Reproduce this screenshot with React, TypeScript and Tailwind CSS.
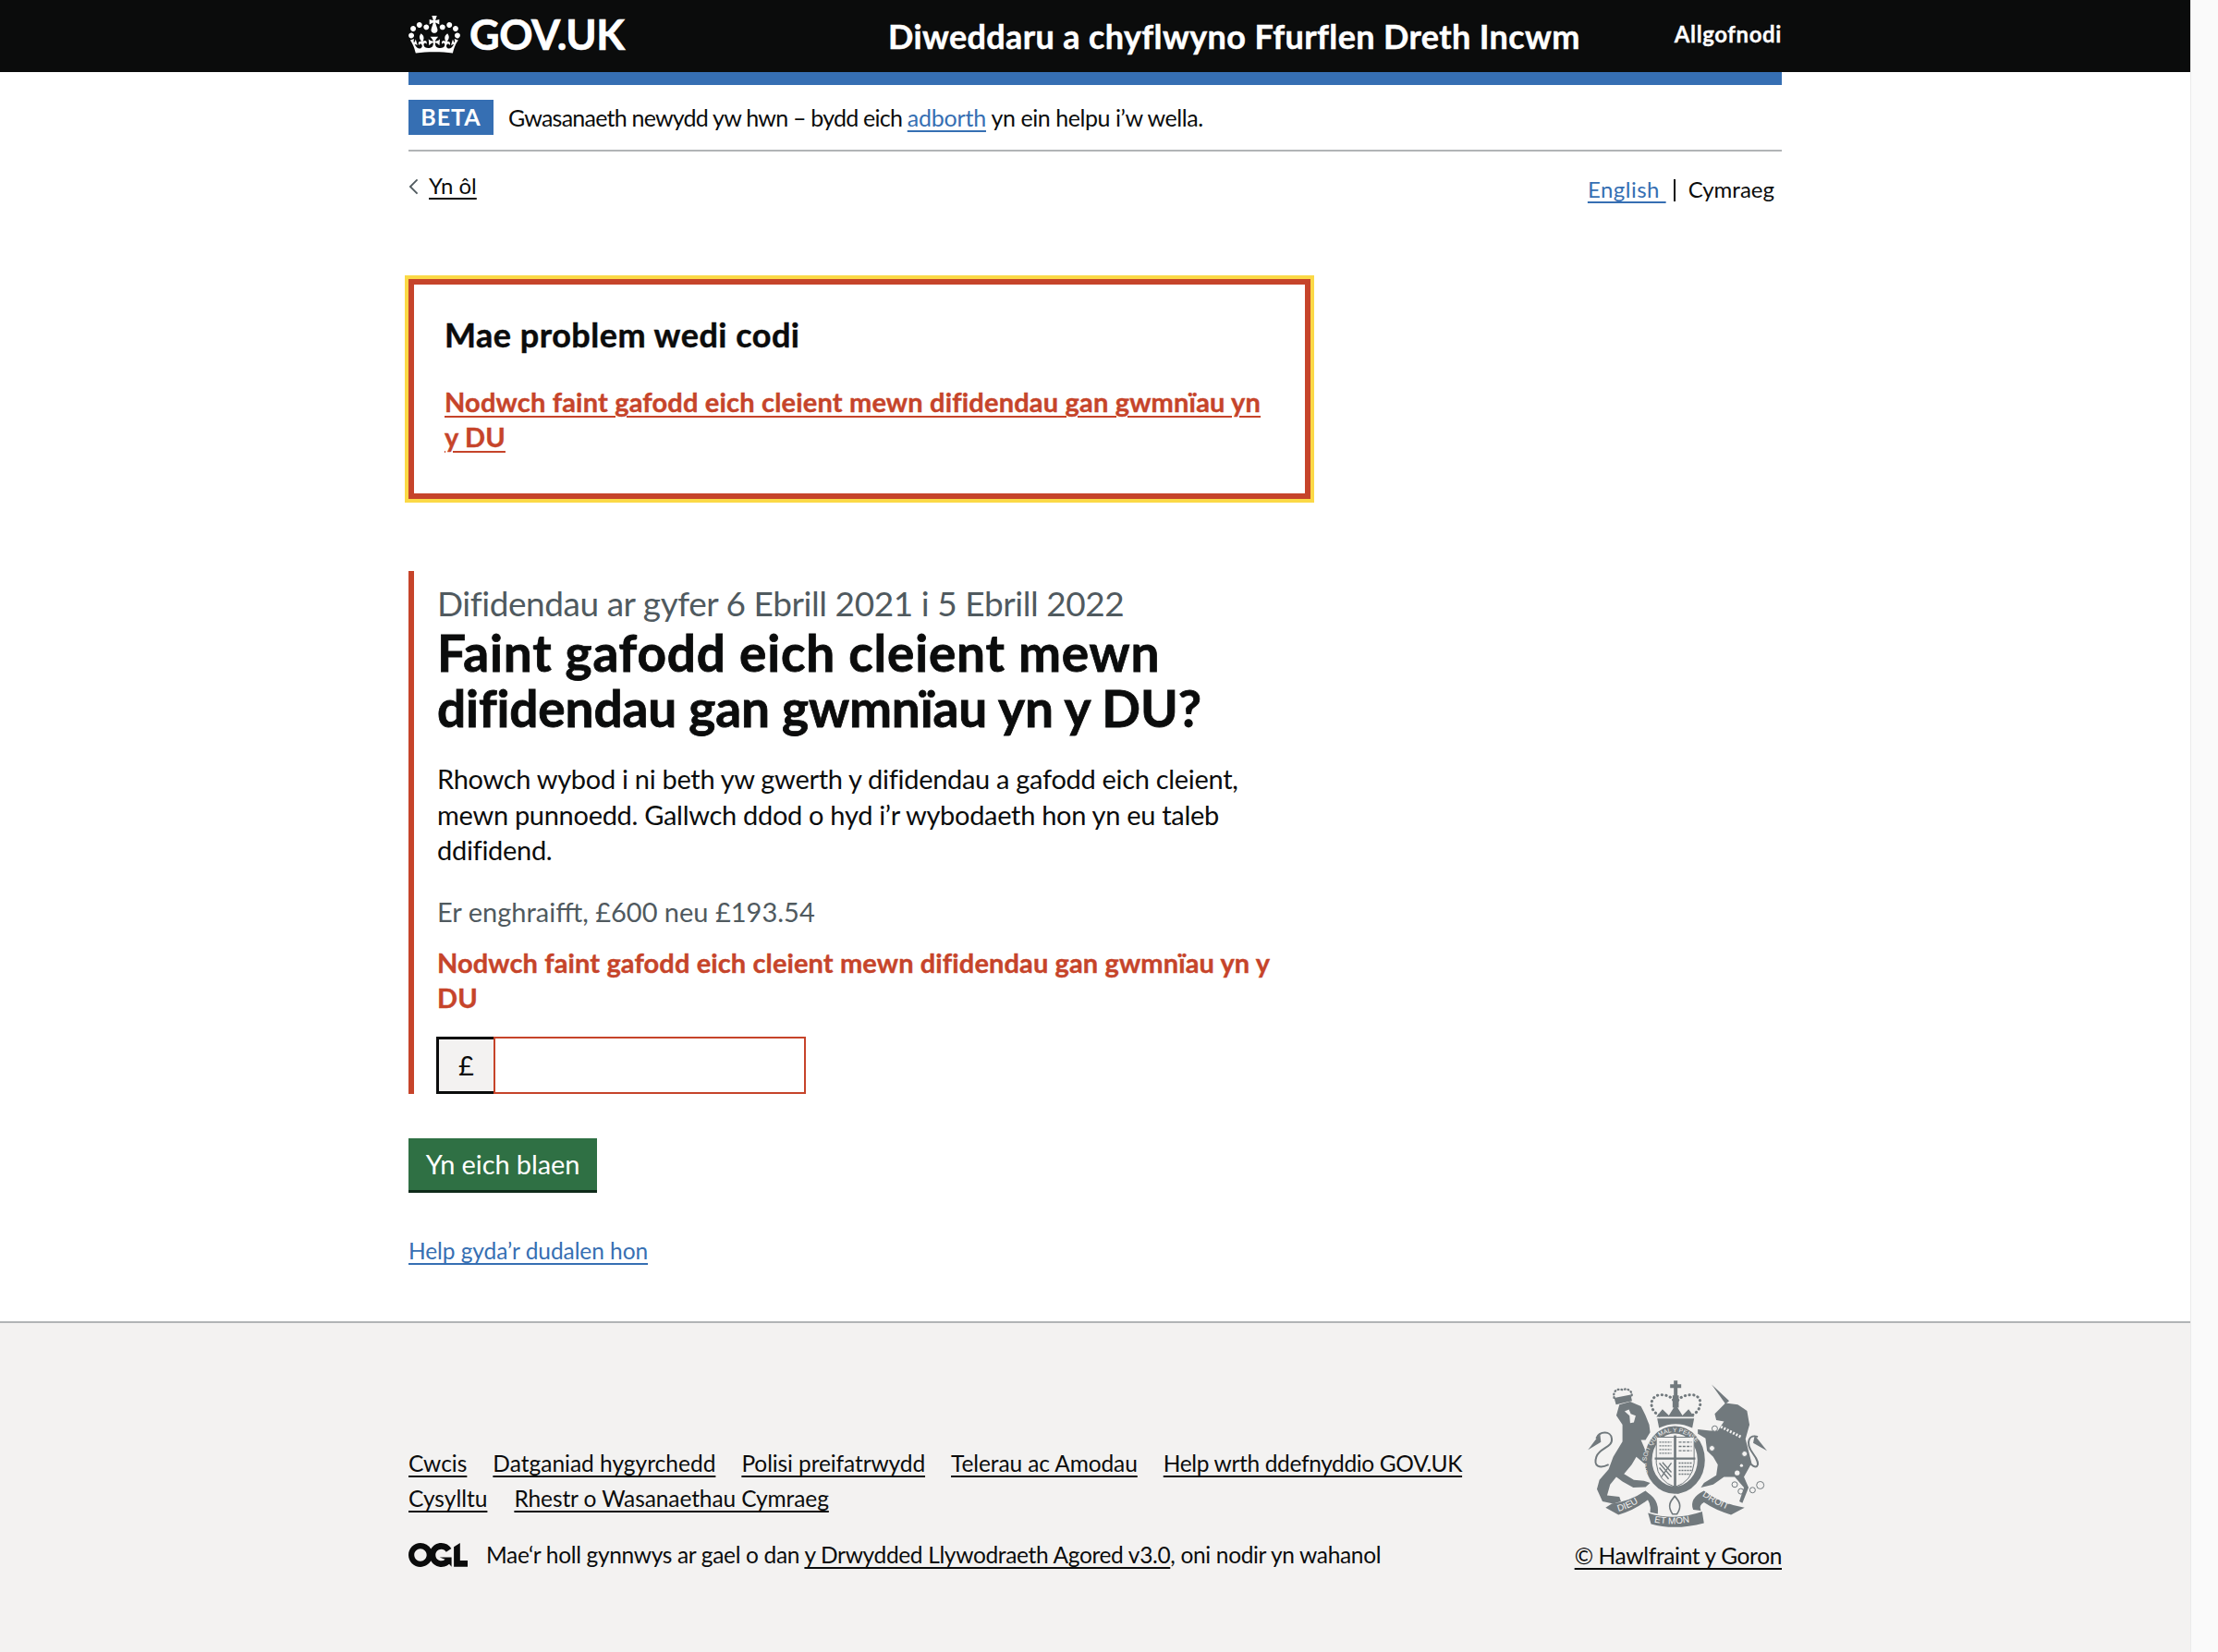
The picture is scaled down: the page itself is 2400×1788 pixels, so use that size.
import React from 'react';

const CROWN =
  'M25 30.2c3.5 1.5 7.7-.2 9.1-3.7 1.5-3.6-.2-7.8-3.9-9.2-3.6-1.4-7.6.3-9.1 3.9-1.4 3.5.3 7.5 3.9 9zM9 39.5c3.6 1.5 7.8-.2 9.2-3.7 1.5-3.6-.2-7.8-3.9-9.1-3.6-1.5-7.6.2-9.1 3.8-1.4 3.5.3 7.5 3.8 9zM4.4 57.2c3.5 1.5 7.7-.2 9.1-3.8 1.5-3.6-.2-7.7-3.9-9.1-3.5-1.5-7.6.3-9.1 3.8-1.4 3.5.3 7.6 3.9 9.1zm38.3-21.4c3.5 1.5 7.7-.2 9.1-3.8 1.5-3.6-.2-7.7-3.9-9.1-3.6-1.5-7.6.3-9.1 3.8-1.3 3.6.4 7.7 3.9 9.1zm64.4-5.6c-3.6 1.5-7.8-.2-9.1-3.7-1.5-3.6.2-7.8 3.8-9.2 3.6-1.4 7.7.3 9.2 3.9 1.3 3.5-.4 7.5-3.9 9zm15.9 9.3c-3.6 1.5-7.7-.2-9.1-3.7-1.5-3.6.2-7.8 3.7-9.1 3.6-1.5 7.7.2 9.2 3.8 1.5 3.5-.3 7.5-3.8 9zm4.7 17.7c-3.6 1.5-7.8-.2-9.2-3.8-1.5-3.6.2-7.7 3.9-9.1 3.6-1.5 7.7.3 9.2 3.8 1.3 3.5-.4 7.6-3.9 9.1zM89.3 35.8c-3.6 1.5-7.8-.2-9.2-3.8-1.4-3.6.2-7.7 3.9-9.1 3.6-1.5 7.7.3 9.2 3.8 1.4 3.6-.3 7.7-3.9 9.1zM69.7 17.7l8.9 4.7V9.3l-8.9 2.8c-.2-.3-.5-.6-.9-.9L72.4 0H59.6l3.5 11.2c-.3.3-.6.5-.9.9l-8.8-2.8v13.1l8.8-4.7c.3.3.6.7.9.9l-5 15.4v.1c-.2.8-.4 1.6-.4 2.4 0 4.1 3.1 7.5 7 8.1h.2c.3 0 .7.1 1 .1.4 0 .7 0 1-.1h.2c4-.6 7.1-4.1 7.1-8.1 0-.8-.1-1.7-.4-2.4V34l-5.1-15.4c.4-.2.7-.6 1-.9zM66 92.8c16.9 0 32.8 1.1 47.1 3.2 4-16.9 8.9-26.7 14-33.5l-9.6-3.4c1 4.9 1.1 7.2 0 10.2-1.5-1.4-3-4.3-4.2-8.7L108.6 76c2.8-2 5-3.2 7.5-3.3-4.4 9.4-10 11.9-13.6 11.2-4.3-.8-6.3-4.6-5.6-7.9 1-4.7 5.7-5.9 8-.5 4.3-8.7-3-11.4-7.6-8.8 7.1-7.2 7.9-13.5 2.1-21.1-8 6.1-8.1 12.3-4.5 20.8-4.7-5.4-12.1-2.5-9.5 6.2 3.4-5.2 7.9-2 7.2 3.1-.6 4.3-6.4 7.8-13.5 7.2-10.3-.9-10.9-8-11.2-13.8 2.5-.5 7.1 1.8 11 7.3L80.2 60c-4.1 4.4-8 5.3-12.3 5.4 1.4-4.4 8-11.6 8-11.6H55.5s6.4 7.2 7.9 11.6c-4.2-.1-8-1-12.3-5.4l1.4 16.4c3.9-5.5 8.5-7.7 10.9-7.3-.3 5.8-.9 12.8-11.1 13.8-7.2.6-12.9-2.9-13.5-7.2-.7-5 3.8-8.3 7.1-3.1 2.7-8.7-4.6-11.6-9.4-6.2 3.7-8.5 3.6-14.7-4.6-20.8-5.8 7.6-5 13.9 2.2 21.1-4.7-2.6-11.9.1-7.7 8.8 2.3-5.5 7.1-4.2 8.1.5.7 3.3-1.3 7.1-5.7 7.9-3.5.7-9-1.8-13.5-11.2 2.5.1 4.7 1.3 7.5 3.3l-4.7-15.4c-1.2 4.4-2.7 7.2-4.3 8.7-1.1-3-.9-5.3 0-10.2l-9.5 3.4c5 6.9 9.9 16.7 14 33.5 14.8-2.1 30.8-3.2 47.7-3.2z';

const OGL =
  'M421.5 142.8V.1l-50.7 32.3v161.1h112.4v-50.7zm-122.3-9.6A47.12 47.12 0 0 1 221 97.8c0-26 21.1-47.1 47.1-47.1 16.7 0 31.4 8.7 39.7 21.8l42.7-27.2A97.63 97.63 0 0 0 268.1 0c-36.5 0-68.3 20.1-85.1 49.7A98 98 0 0 0 97.8 0C43.9 0 0 43.9 0 97.8s43.9 97.8 97.8 97.8c36.5 0 68.3-20.1 85.1-49.7a97.76 97.76 0 0 0 149.6 25.4l19.4 22.4V117h-97.5zM97.8 148.5c-28 0-50.7-22.7-50.7-50.7s22.7-50.7 50.7-50.7 50.7 22.7 50.7 50.7-22.7 50.7-50.7 50.7z';

// royal coat of arms, drawn by hand in the footer's colours
const Crest = () => (
  <svg viewBox="100 60 610 500" className="w-[203px] h-[167px] block" fill="#71797d">
    <defs>
      <path id="garter" d="M318 400 A92 104 0 1 1 472 400" />
      <path id="ribbonLeft" d="M212 498 Q262 484 298 452" />
      <path id="ribbonMid" d="M328 532 Q395 547 472 525" />
      <path id="ribbonRight" d="M484 446 Q530 478 588 500" />
    </defs>
    {/* lion */}
    <path d="M215 150 L250 140 L285 155 L300 185 L312 215 L315 240 L300 265 L285 265 L300 300 L318 320 L320 345 L300 345 L270 320 L255 345 L230 375 L262 395 L295 398 L315 405 L300 418 L260 420 L225 400 L205 385 L185 410 L175 445 L215 450 L220 465 L195 472 L160 465 L142 425 L150 395 L180 360 L195 320 L225 270 L225 215 L205 185 Z" />
    <path d="M180 345 C150 360 130 350 140 320 C150 290 195 290 190 260 C188 235 150 235 140 260" fill="none" stroke="#71797d" strokeWidth="6" />
    <path d="M152 245 L113 297 L155 272 Z" />
    <path d="M198 128 C192 100 215 98 225 102 C240 95 258 105 255 122" fill="none" stroke="#71797d" strokeWidth="7" strokeDasharray="2 9" strokeLinecap="round" />
    <path d="M198 128 L252 118 L256 138 L204 150 Z" />
    <path d="M232 172 L246 166 L252 180 L268 186 L262 208 L250 210 L248 186 Z" fill="#f3f2f1" />
    {/* crown */}
    <path d="M345 185 C310 170 310 120 350 118 C375 118 395 130 398 155 C400 130 425 118 450 118 C490 120 485 170 450 185" fill="none" stroke="#71797d" strokeWidth="9" strokeDasharray="1 13" strokeLinecap="round" />
    <path d="M392 72 H404 V84 H416 V96 H404 V120 H408 V160 H388 V120 H392 V96 H380 V84 H392 Z" />
    <path d="M398 150 L420 185 L440 165 L458 190 L335 190 L355 165 L376 185 Z" />
    <path d="M338 195 H458 L452 226 Q398 200 344 226 Z" />
    {/* garter and shield */}
    <ellipse cx="395" cy="330" rx="86" ry="98" fill="#f3f2f1" stroke="#71797d" strokeWidth="24" />
    <path d="M335 256 H458 V340 Q452 400 396 418 Q340 400 335 340 Z" fill="#f3f2f1" stroke="#71797d" strokeWidth="3" />
    <path d="M392 250 H400 V420 H392 Z M330 322 H462 V329 H330 Z" />
    <g fill="none" stroke="#71797d" strokeWidth="4">
      <path d="M345 272 H384 M345 284 H384 M345 296 H384 M345 308 H384" strokeDasharray="6 3" />
      <path d="M408 272 H450 M408 286 H450 M408 300 H450" strokeDasharray="9 4" />
      <path d="M408 340 H450 M408 352 H450 M408 364 H450 M408 376 H446" strokeDasharray="6 3" />
      <path d="M345 340 L384 385 M355 338 L384 370 M345 355 L375 392 M384 340 L352 385" />
    </g>
    <circle cx="405" cy="430" r="10" />
    <text fontFamily="'Liberation Sans', sans-serif" fontSize="20" fill="#f3f2f1">
      <textPath href="#garter" startOffset="3%">HONI SOIT QUI MAL Y PENSE</textPath>
    </text>
    {/* unicorn */}
    <path d="M515 85 L572 138 L560 148 Z" />
    <path d="M560 145 L600 150 L630 170 L638 215 L625 262 L645 340 L620 385 L635 420 L615 470 L605 465 L620 420 L590 385 L555 385 L520 410 L480 420 L490 405 L530 380 L535 345 L520 320 L500 300 L495 260 L470 245 L470 230 L510 235 L535 235 L555 205 L530 200 L525 180 Z" />
    <path d="M545 222 L612 256" stroke="#f3f2f1" strokeWidth="9" strokeDasharray="6 5" fill="none" />
    <path d="M630 330 C660 370 680 350 650 310 C620 270 640 245 665 255" fill="none" stroke="#71797d" strokeWidth="6" />
    <path d="M655 250 L695 300 L650 275 Z" />
    <g fill="#f3f2f1">
      <circle cx="525" cy="228" r="9" stroke="#71797d" strokeWidth="3" />
      <circle cx="516" cy="292" r="9" stroke="#71797d" strokeWidth="3" />
      <circle cx="622" cy="310" r="9" stroke="#71797d" strokeWidth="3" />
      <circle cx="598" cy="372" r="8" />
      <circle cx="612" cy="348" r="5" />
    </g>
    <g fill="none" stroke="#71797d" strokeWidth="3">
      <circle cx="590" cy="410" r="9" />
      <circle cx="610" cy="432" r="9" />
      <circle cx="648" cy="428" r="9" />
      <circle cx="673" cy="412" r="12" />
    </g>
    {/* motto ribbons */}
    <path d="M170 485 L212 508 Q265 495 320 450 L300 430 Q250 465 190 472 Z" />
    <path d="M298 432 Q345 455 340 505 L315 500 Q320 470 298 450 Z" />
    <path d="M308 502 Q395 530 484 498 L490 535 Q395 560 318 538 Z" />
    <path d="M455 492 Q440 455 490 430 Q540 470 622 485 L578 508 Q530 495 490 468 Q472 478 480 495 Z" />
    <path d="M395 448 C410 465 420 480 402 506 L388 506 C370 480 380 465 395 448 Z" fill="none" stroke="#71797d" strokeWidth="5" />
    <g fontFamily="'Liberation Sans', sans-serif" fontSize="30" fill="#f3f2f1">
      <text><textPath href="#ribbonLeft">DIEU</textPath></text>
      <text><textPath href="#ribbonMid">ET MON</textPath></text>
      <text><textPath href="#ribbonRight">DROIT</textPath></text>
    </g>
  </svg>
);

const FooterLink = ({ children }: { children: React.ReactNode }) => (
  <a href="#" className="underline decoration-2 underline-offset-4">{children}</a>
);

const App: React.FC = () => {
  return (
    <div className="flex min-h-[1788px] font-['Lato','Noto_Sans',sans-serif] text-[#0b0c0c] bg-white">
      <div className="flex-1 flex flex-col min-w-0">
        {/* Header */}
        <header className="bg-[#0b0c0c] h-[78px]">
          <div className="w-[1486px] mx-auto h-full flex items-center text-white">
            <svg viewBox="0 0 132 97" className="w-[56px] h-[41px] shrink-0 mt-[-4px]" fill="currentColor">
              <path fillRule="evenodd" d={CROWN} />
            </svg>
            <span className="ml-[10px] text-[45px] font-bold leading-none w-[453px] tracking-[-0.01em] mt-[-4px] [-webkit-text-stroke:0.7px_#ffffff]">GOV.UK</span>
            <span className="text-[36px] font-bold w-[850px] whitespace-nowrap tracking-[0.37px] [-webkit-text-stroke:0.5px_#ffffff]">Diweddaru a chyflwyno Ffurflen Dreth Incwm</span>
            <span className="ml-auto text-[24px] font-bold mt-[-4px] tracking-[0.6px] [-webkit-text-stroke:0.3px_#ffffff]">Allgofnodi</span>
          </div>
        </header>

        <div className="w-[1486px] mx-auto">
          <div className="h-[14px] bg-[#366fb3]" />

          {/* Beta banner */}
          <div className="mt-4 pb-4 border-b-2 border-[#b1b4b6] flex items-center">
            <strong className="w-[92px] h-[38px] bg-[#366fb3] text-white text-[25px] font-bold tracking-[0.04em] flex items-center justify-center">BETA</strong>
            <p className="ml-4 text-[25px] leading-[38px] tracking-[-0.77px]">
              Gwasanaeth newydd yw hwn – bydd eich <a href="#" className="text-[#366fb3] underline decoration-2 underline-offset-4 tracking-[-0.2px]">adborth</a> <span className="tracking-[-0.45px]">yn ein helpu i’w wella.</span>
            </p>
          </div>

          {/* Back + language */}
          <div className="flex justify-between pt-[18px] h-[138px] text-[24px]">
            <a href="#" className="flex items-start leading-[38px]">
              <svg viewBox="0 0 12 20" className="w-[11px] h-[18px] mt-[11px] mr-[11px]" fill="none" stroke="#505a5f" strokeWidth="2">
                <path d="M10.5 1.5 L2 10 L10.5 18.5" />
              </svg>
              <span className="underline decoration-2 underline-offset-4">Yn ôl</span>
            </a>
            <div className="flex items-start leading-[38px] mt-[4px] pr-2">
              <a href="#" className="text-[#366fb3] underline decoration-2 underline-offset-4 whitespace-pre tracking-[0.5px]">{'English '}</a>
              <span className="border-l-2 border-[#0b0c0c] h-[24px] mt-[8px] ml-[8px] mr-[14px]" />
              <span>Cymraeg</span>
            </div>
          </div>

          {/* Error summary */}
          <div className="w-[976px] h-[238px] border-[6px] border-[#c6442a] outline-[4px] outline-solid outline-[#fbd946] pl-[33px] pr-[40px] pt-[31px]">
            <h2 className="text-[36px] font-bold leading-[46px] tracking-[0.5px] [-webkit-text-stroke:0.5px_#0b0c0c]">Mae problem wedi codi</h2>
            <a href="#" className="block mt-[31px] text-[29px] font-bold leading-[38px] tracking-[0.18px] text-[#c6442a] underline decoration-2 underline-offset-4 [-webkit-text-stroke:0.4px_#c6442a]">
              Nodwch faint gafodd eich cleient mewn difidendau gan gwmnïau yn y DU
            </a>
          </div>

          {/* Question */}
          <div className="mt-[78px] h-[566px] border-l-[6px] border-[#c6442a] pl-[25px] pt-[12px] w-[976px]">
            <p className="text-[37px] leading-[46px] text-[#505a5f] tracking-[-0.45px]">Difidendau ar gyfer 6 Ebrill 2021 i 5 Ebrill 2022</p>
            <h1 className="text-[55px] leading-[60px] font-bold [-webkit-text-stroke:0.8px_#0b0c0c]">
              <span className="block tracking-[0.8px]">Faint gafodd eich cleient mewn</span>
              <span className="block tracking-[-0.15px]">difidendau gan gwmnïau yn y DU?</span>
            </h1>
            <p className="mt-[28px] text-[29px] leading-[38.5px] tracking-[-0.3px]">
              Rhowch wybod i ni beth yw gwerth y difidendau a gafodd eich cleient, mewn punnoedd. Gallwch ddod o hyd i’r wybodaeth hon yn eu taleb ddifidend.
            </p>
            <p className="mt-[28px] text-[29px] leading-[38px] text-[#505a5f]">Er enghraifft, £600 neu £193.54</p>
            <p className="mt-[17px] w-[920px] text-[29px] leading-[38px] font-bold text-[#c6442a] tracking-[0.12px] [-webkit-text-stroke:0.4px_#c6442a]">Nodwch faint gafodd eich cleient mewn difidendau gan gwmnïau yn y DU</p>
            <div className="mt-[23px] -ml-px flex h-[62px]">
              <div className="w-[62px] border-[3px] border-[#0b0c0c] border-r-0 bg-[#f3f2f1] flex items-center justify-center text-[29px]">£</div>
              <div className="w-[338px] border-2 border-[#c6442a] bg-white" />
            </div>
          </div>

          <button className="mt-12 w-[204px] h-[59px] bg-[#2f7044] border-b-[3px] border-[#0f2a1a] text-white text-[29px] tracking-[-0.1px] flex items-center justify-center">Yn eich blaen</button>

          <a href="#" className="block mt-[44px] w-fit text-[24.5px] leading-[38px] tracking-[-0.07px] text-[#366fb3] underline decoration-2 underline-offset-4">Help gyda’r dudalen hon</a>
        </div>

        {/* Footer */}
        <footer className="mt-[57px] flex-1 bg-[#f3f2f1] border-t-2 border-[#b1b4b6]">
          <div className="w-[1486px] mx-auto flex justify-between pt-[58px] text-[24.5px] leading-[38px]">
            <div className="pt-[75px]">
              <div className="flex gap-x-[28px]">
                <FooterLink>Cwcis</FooterLink>
                <FooterLink>Datganiad hygyrchedd</FooterLink>
                <span className="tracking-[-0.1px]"><FooterLink>Polisi preifatrwydd</FooterLink></span>
                <span className="tracking-[-0.1px]"><FooterLink>Telerau ac Amodau</FooterLink></span>
                <span className="tracking-[-0.35px]"><FooterLink>Help wrth ddefnyddio GOV.UK</FooterLink></span>
              </div>
              <div className="flex gap-x-[29px]">
                <FooterLink>Cysylltu</FooterLink>
                <span className="tracking-[-0.1px]"><FooterLink>Rhestr o Wasanaethau Cymraeg</FooterLink></span>
              </div>
              <div className="mt-[23px] flex items-center">
                <svg viewBox="0 0 483.2 195.7" className="w-[64px] h-[26px] mr-[20px]" fill="currentColor">
                  <path d={OGL} />
                </svg>
                <p className="tracking-[-0.34px]">Mae‘r holl gynnwys ar gael o dan <FooterLink>y Drwydded Llywodraeth Agored v3.0</FooterLink>, oni nodir yn wahanol</p>
              </div>
            </div>
            <div className="flex flex-col items-center">
              <Crest />
              <div className="mt-[8px] tracking-[-0.35px]"><FooterLink>© Hawlfraint y Goron</FooterLink></div>
            </div>
          </div>
        </footer>
      </div>

      {/* Scrollbar gutter */}
      <div className="w-[30px] shrink-0 bg-[#fafafa] border-l border-[#ebebeb]" />
    </div>
  );
};

export default App;
